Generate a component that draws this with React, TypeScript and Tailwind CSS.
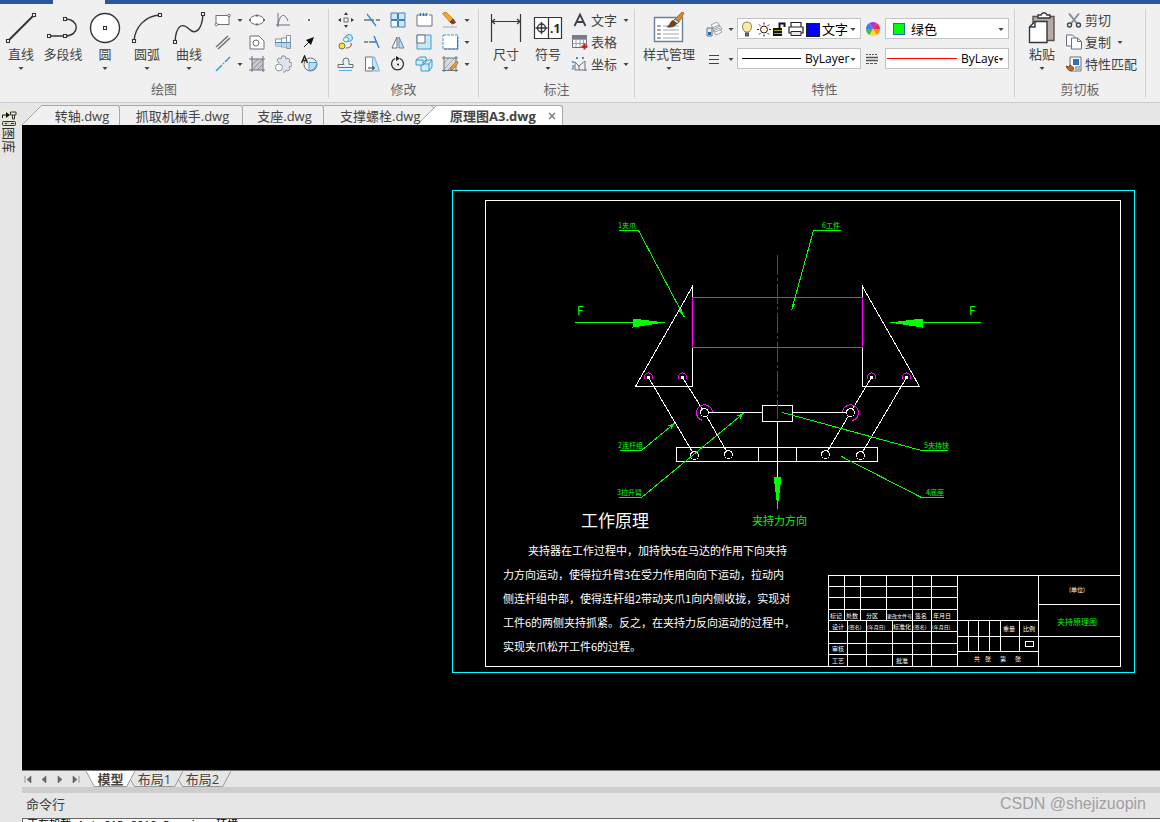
import React from 'react';

type Kids = { children?: React.ReactNode };

const Caret = () => (
  <svg width="6" height="8" viewBox="0 0 6 8" aria-hidden="true">
    <path d="M0.5 3h5L3 6z" fill="#444" />
  </svg>
);

const Big = ({ children }: Kids) => (
  <svg width="36" height="32" viewBox="0 0 36 32" fill="none" stroke="#33363d" strokeWidth="1.4" aria-hidden="true">
    {children}
  </svg>
);

const Sm = ({ children }: Kids) => (
  <svg width="18" height="18" viewBox="0 0 18 18" fill="none" stroke="#6b717c" strokeWidth="1" aria-hidden="true">
    {children}
  </svg>
);

const Node = ({ x, y }: { x: number; y: number }) => (
  <rect x={x - 1.5} y={y - 1.5} width="3" height="3" fill="#fff" strokeWidth="1.1" />
);

function BigButton({ label, icon, wide, caret = true }: { label: string; icon: React.ReactNode; wide?: boolean; caret?: boolean }) {
  return (
    <button type="button" className={(wide ? 'w-16' : 'w-[42px]') + ' flex shrink-0 flex-col items-center pt-[3px] text-[13px] leading-5 whitespace-nowrap'}>
      <Big>{icon}</Big>
      <span>{label}</span>
      {caret && <Caret />}
    </button>
  );
}

function Tool({ name, children }: { name: string } & Kids) {
  return (
    <button type="button" aria-label={name} className="flex h-[22px] w-[26px] items-center justify-center">
      <Sm>{children}</Sm>
    </button>
  );
}

function More({ name }: { name: string }) {
  return (
    <button type="button" aria-label={name} className="flex h-5 w-2 items-center justify-center">
      <Caret />
    </button>
  );
}

function TextTool({ label, caret, icon }: { label: string; caret?: boolean; icon: React.ReactNode }) {
  return (
    <button type="button" className="flex h-[22px] items-center gap-[2px] text-[13px] leading-5 whitespace-nowrap">
      <Sm>{icon}</Sm>
      <span>{label}</span>
      {caret && (
        <span className="pl-1">
          <Caret />
        </span>
      )}
    </button>
  );
}

function Group({ title, width, children }: { title: string; width: string } & Kids) {
  return (
    <section aria-label={title} className={width + ' flex shrink-0 flex-col border-r border-[#d2d2d2]'}>
      <div className="flex h-[71px] items-start">{children}</div>
      <h2 className="text-center text-[13px] leading-[18px] text-[#666]">{title}</h2>
    </section>
  );
}

function Combo({ label, value, lead, options, small }: { label: string; value: string; lead: React.ReactNode; options: string[]; small?: boolean }) {
  return (
    <label className="flex h-[21px] w-[124px] items-center border border-[#c3c3c3] bg-white pr-1 text-black">
      {lead}
      <select
        aria-label={label}
        defaultValue={value}
        className={(small ? 'text-[12px]' : 'text-[13px]') + ' h-[18px] min-w-0 flex-1 appearance-none overflow-hidden bg-transparent leading-[18px] [text-overflow:clip]'}
      >
        {options.map((o) => (
          <option key={o}>{o}</option>
        ))}
      </select>
      <Caret />
    </label>
  );
}

function DrawGroup() {
  return (
    <Group title="绘图" width="w-[329px]">
      <BigButton label="直线" icon={<><path d="M5 29L31 3" strokeWidth="2" /><Node x={5} y={29} /><Node x={31} y={3} /></>} />
      <BigButton label="多段线" caret={false} icon={<><path d="M4 24H20M20 7C35 7 35 24 20 24" /><Node x={4} y={24} /><Node x={20} y={24} /><Node x={20} y={7} /></>} />
      <BigButton label="圆" icon={<><circle cx="18" cy="16" r="14.5" fill="#fff" /><Node x={18} y={16} /></>} />
      <BigButton label="圆弧" icon={<><path d="M5 29C6 15 16 4 31 3" /><Node x={5} y={29} /><Node x={31} y={3} /></>} />
      <BigButton label="曲线" icon={<><path d="M4 30C5 12 12 11 18 17S31 19 32 2" /><Node x={4} y={30} /><Node x={32} y={2} /></>} />
      <div className="flex flex-col">
        <div className="flex items-center">
          <Tool name="矩形"><rect x="2" y="4.500" width="13" height="9" fill="#fff" /><circle cx="2.500" cy="13.500" r="1.300" fill="#fff" /><circle cx="15" cy="4.500" r="1.300" fill="#fff" /></Tool>
          <More name="更多矩形" />
          <Tool name="椭圆"><ellipse cx="9" cy="9" rx="7" ry="4.500" fill="#fff" /><path d="M9 3.500v2M9 12.500v2M1 9h2M15 9h2" strokeWidth="2" /></Tool>
          <Tool name="公式曲线"><path d="M4 2v14M2 14h14M4 14C6 2 11 2 14 10" /></Tool>
          <Tool name="点"><circle cx="9" cy="9" r="1" fill="#444" stroke="none" /></Tool>
        </div>
        <div className="flex items-center">
          <Tool name="平行线"><path d="M2 14L14 3M4 16L16 5" strokeWidth="1.500" /></Tool>
          <span className="w-2" />
          <Tool name="填充边界"><path d="M2 3h9l5 5v8H2z" fill="#fff" /><circle cx="8" cy="10" r="3" /></Tool>
          <Tool name="轴"><path d="M1.500 6h6v7h-6zM7.500 5h5v9h-5zM12.500 2.500h4v13h-4z" fill="#fff" stroke="#8a929e" /><path d="M1.500 9.500h6v3.500h-6zM8 10h4.500v4H8zM13 10h3v5h-3z" fill="#b9d6ee" stroke="none" /><path d="M1 9.500h16" stroke="#4b8cc6" /></Tool>
          <Tool name="箭头"><path d="M4 14l5-5" stroke="#111" /><path d="M14 4l-3 8-5-5z" fill="#111" stroke="none" /></Tool>
        </div>
        <div className="flex items-center">
          <Tool name="中心线"><path d="M2 16L8 10M9 9l1-1M11 7l5-5" stroke="#29a3e0" strokeWidth="1.500" /></Tool>
          <More name="更多中心线" />
          <Tool name="剖面线"><path d="M4 4h11v11H4z" fill="#c6c9cf" stroke="none" /><path d="M4 10l6-6M4 15L15 4M9 15l6-6" stroke="#8d929b" /><path d="M1 4h16M1 15h16M4 1v16M15 1v16" /></Tool>
          <Tool name="齿轮"><path d="M5 8L3 5l2-2 2 1 1-3h3l1 3 2-1 2 2-1 2 3 1v3l-3 1 1 2-2 2-2-1-1 2H9" fill="#dfe3ee" stroke="#8b91a2" /><circle cx="5" cy="12.500" r="3.500" fill="#fff" stroke="#8b91a2" /></Tool>
          <Tool name="局部放大图"><circle cx="10.500" cy="9.500" r="6.500" /><path d="M9 7.500h7.500a7 7 0 0 1-7.500 8z" fill="#b4e0fa" stroke="#4c9ed4" /><path d="M1.500 8l3-7 3 7M3 5.500h3" stroke="#222" strokeWidth="1.400" /></Tool>
        </div>
      </div>
    </Group>
  );
}

function ModifyGroup() {
  return (
    <Group title="修改" width="w-[150px]">
      <div className="flex flex-col pl-1">
        <div className="flex items-center">
          <Tool name="移动"><rect x="7" y="7" width="4" height="4" /><path d="M9 1l2 3H7zM9 17l2-3H7zM1 9l3-2v4zM17 9l-3-2v4z" fill="#33363d" stroke="none" /></Tool>
          <Tool name="裁剪"><path d="M1 9h10M13 9h4" strokeWidth="1.300" /><path d="M4 3l9 12" stroke="#2b8bd3" strokeWidth="1.300" /></Tool>
          <Tool name="阵列"><path d="M2 2h6.500v6.500H2zM9.500 9.500H16V16H9.500zM9.500 2H16v6.500H9.500z" fill="#c8e8fb" stroke="#4580b1" /><path d="M2 9.500h6.500V16H2z" fill="#fff" stroke="#4580b1" /></Tool>
          <Tool name="打断"><path d="M5 4H2v11h15V4h-3M7 4h5" fill="#fff" /><path d="M5.500 2v3M8.500 2v3M11.500 2v3" stroke="#2b78d0" strokeWidth="1.500" /></Tool>
          <Tool name="删除"><path d="M1.500 2.500L5 1l7 7-3 3z" fill="#f5a82c" stroke="#c98227" /><path d="M12 8l2.500 3.500L11.500 13 9 11z" fill="#7a4040" stroke="#5c3b3b" /><path d="M2 16h14" stroke="#aaa" /></Tool>
          <More name="更多删除" />
        </div>
        <div className="flex items-center">
          <Tool name="复制对象"><circle cx="12" cy="5" r="3.500" fill="#c4e6fa" stroke="#3b9dd8" /><circle cx="9" cy="6.500" r="2.500" fill="#e6f5fd" stroke="#3b9dd8" /><circle cx="5" cy="13" r="3" fill="#fbe819" /><path d="M9 15c4 0 6-2 5-5" stroke="#c32b2b" /></Tool>
          <Tool name="延伸"><path d="M1 9h4M6 9h3" strokeWidth="1.500" /><path d="M9 9h4M11 3l5 12" stroke="#2b78c6" strokeWidth="1.300" /></Tool>
          <Tool name="镜像"><path d="M8 4v11H3z" fill="#fff" /><path d="M10 4v11h5z" fill="#b8def5" stroke="#5b8cb0" /></Tool>
          <Tool name="缩放"><path d="M2 2h14v14H2z" fill="#c6e9fc" stroke="#4b96c9" /><path d="M2 2h8v8H2z" fill="#fff" /></Tool>
          <Tool name="分解"><path d="M2 2h15v14H2z" fill="#fff" strokeDasharray="3 1" stroke="#4b96c9" /><path d="M16.500 4v12H3" /></Tool>
          <More name="更多分解" />
        </div>
        <div className="flex items-center">
          <Tool name="偏移"><path d="M1 12.500h15v-3h-4V6a3 3 0 0 0-6 0v2l1 1.500H1z" fill="#e3f2fc" /><path d="M2 15.500h13" stroke="#59b1e4" /></Tool>
          <Tool name="拉伸"><path d="M2.500 2h7v14h-7z" fill="#fff" /><path d="M9.500 2h2l5 14h-7z" fill="#c4e6fa" stroke="#79afd1" /><path d="M5 13h6M9.500 11l2 2-2 2" stroke="#333" /></Tool>
          <Tool name="旋转"><path d="M11 3.500a6 6 0 1 1-5 0" stroke="#333" strokeWidth="1.300" /><path d="M7 1l4 2.500L7 6z" fill="#222" stroke="none" /><circle cx="9" cy="9.500" r="1" fill="#222" stroke="none" /></Tool>
          <Tool name="三维"><path d="M1 5l4-3h6v5l-3 3H1zM8 8l3-3h6v7l-3 4H6v-6" fill="#d5edfb" stroke="#3e96cc" /><path d="M8 9h6v7M14 9l3-4M1 5h7v5" stroke="#3e96cc" /></Tool>
          <Tool name="编辑填充"><path d="M3 3h12v12H3z" fill="#d7dade" stroke="none" /><path d="M3 8l5-5M3 14L14 3M7 15l8-8" stroke="#aaa" /><path d="M1 3h16M1 15.500h16M3 1v16M15 1v16" /><path d="M16 6l-6 6-1 3 3-1 5-6z" fill="#eca22e" stroke="#b0752e" /></Tool>
          <More name="更多编辑" />
        </div>
      </div>
    </Group>
  );
}

function AnnotateGroup() {
  return (
    <Group title="标注" width="w-[156px]">
      <div className="flex pl-[6px]">
        <BigButton label="尺寸" icon={<path d="M3.500 2v28M32.500 2v28M3 9.500h30M7 7L4 9.500 7 12M29 7l3 2.500-3 2.500" strokeWidth="1.200" />} />
        <BigButton
          label="符号"
          icon={
            <>
              <path d="M4.500 5.500h27v21h-27zM18.500 5.500v21" fill="#fff" strokeWidth="1.200" />
              <circle cx="11.500" cy="16" r="4" />
              <path d="M11.500 10v12M5.500 16h12" />
              <text x="20" y="21" fontSize="12" fontWeight="700" fontFamily="Open Sans, sans-serif" fill="#222" stroke="none">.1</text>
            </>
          }
        />
        <div className="flex flex-col pl-[2px]">
          <TextTool label="文字" caret icon={<path d="M3.500 15L9 3.500l5.500 11.500M5.500 11h7" stroke="#3b4049" strokeWidth="1.800" />} />
          <TextTool label="表格" icon={<><path d="M1.500 2.500h14v12h-14z" fill="#fff" /><path d="M1.500 6.500h14M1.500 10.500h14M5 4v10M9 4v10M12.500 4v10" stroke="#9aa0a8" /><path d="M1 2h15v4H1z" fill="#777d86" stroke="none" /><path d="M13.500 10.500v6M10.500 13.500h6" stroke="#c81e1e" strokeWidth="2" /></>} />
          <TextTool label="坐标" caret icon={<><path d="M4 15V7l4 4 6-5M4 15h12M8 11v4M14 6v10" /><path d="M5 2l2 2M7 2L5 4M11 2l2 2M13 2l-2 2M1 6l1 2 1-2M1 11h2l-2 3h2" stroke="#2f91d1" /></>} />
        </div>
      </div>
    </Group>
  );
}

function LayerLead() {
  return (
    <svg width="84" height="18" viewBox="0 0 84 18" fill="none" stroke="#222" className="shrink-0" aria-hidden="true">
      <path d="M7 12C3 8 4 2 9 2s6 6 2 10z" fill="#ffe9a3" stroke="#8a7d50" />
      <path d="M7.500 13h3v3h-3z" fill="#777" stroke="#444" />
      <circle cx="26" cy="9.500" r="3.500" fill="#fff3cf" />
      <path d="M26 2.500v2M26 14.500v2M19 9.500h2M31 9.500h2M21 4.500l1.500 1.500M29.500 13l1.500 1.500M21 14.500l1.500-1.500M29.500 6l1.500-1.500" />
      <path d="M41.500 8V3.500h5V7" strokeWidth="2" stroke="#111" />
      <path d="M35 8h9v8h-9z" fill="#111" stroke="none" />
      <path d="M36 10.500h8M36 13.500h8" stroke="#a6a324" />
      <path d="M53 7V2.500h10V7M51 7h14v6H51z" fill="#fff" strokeWidth="1.200" />
      <path d="M53 11.500h10v4H53z" fill="#e4e8ee" />
      <rect x="68.500" y="3.500" width="13" height="13" fill="#0000ff" />
    </svg>
  );
}

const Wheel = () => (
  <svg width="16" height="16" viewBox="0 0 16 16" aria-hidden="true">
    <path d="M8 8L4.500 2A7 7 0 0 1 11.500 2z" fill="#b52df0" />
    <path d="M8 8L11.500 2A7 7 0 0 1 15 8z" fill="#f12c50" />
    <path d="M8 8h7a7 7 0 0 1-3.500 6z" fill="#ff8a1c" />
    <path d="M8 8l3.500 6a7 7 0 0 1-7 0z" fill="#ffdc2a" />
    <path d="M8 8l-3.500 6A7 7 0 0 1 1 8z" fill="#45bd4a" />
    <path d="M8 8H1a7 7 0 0 1 3.500-6z" fill="#3f7fe8" />
  </svg>
);

function PropertiesGroup() {
  return (
    <Group title="特性" width="w-[380px]">
      <div className="pl-[2px]">
        <BigButton
          wide
          label="样式管理"
          icon={
            <>
              <path d="M3.500 5.500h28v24h-28z" fill="#fff" stroke="#6a8299" />
              <path d="M6 14h4M6 18h4M6 22h4M6 26h4" stroke="#555" strokeWidth="1" />
              <path d="M12 14h16M12 18h16M12 22h16M12 26h16" stroke="#9ba5bb" strokeWidth="1" />
              <path d="M31 0l2 1-5 9-4-3z" fill="#d9892f" stroke="#b46b20" strokeWidth="1" />
              <path d="M24 7l4 3-2 2-4-3z" fill="#e8eaf0" stroke="#667" strokeWidth="1" />
              <path d="M22 8l4 3c-2 5-7 5-11 4 4-1 3-5 7-7z" fill="#6f4421" stroke="none" />
            </>
          }
        />
      </div>
      <div className="flex flex-col gap-[9px] pt-[9px] pl-1">
        <div className="flex items-center">
          <Sm><path d="M6 5l6-3 3 4-6 3zM7 8l7-3 3 4-7 3zM8 11l6-3 3 4-6 3z" fill="#fff" stroke="#9aa1aa" /><path d="M2 8h5v8H2z" fill="#dfe9f3" /><path d="M3 12h3v3H3z" fill="#246ba8" stroke="none" /></Sm>
          <div className="w-[14px] pl-1"><More name="图层工具" /></div>
          <Combo label="图层" value="文字" options={['文字', '轮廓']} lead={<LayerLead />} />
          <div className="w-6 pl-1"><Wheel /></div>
          <Combo
            label="颜色"
            value="绿色"
            options={['绿色', '红色']}
            lead={
              <span className="w-[25px] pl-[7px]">
                <span className="block size-3 border border-[#2369c9] bg-[#00ff00]" />
              </span>
            }
          />
        </div>
        <div className="flex items-center">
          <Sm><path d="M4 5.500h10M4 9.500h10M4 13.500h10" stroke="#444" strokeWidth="1.200" /></Sm>
          <div className="w-[14px] pl-1"><More name="线宽" /></div>
          <Combo small label="线型" value="ByLayer" options={['ByLayer', 'ByBlock']} lead={<span className="mr-1 ml-1 h-px w-[59px] shrink-0 bg-black" />} />
          <div className="w-6 pl-1">
            <svg width="14" height="16" viewBox="0 0 14 16" stroke="#555" aria-hidden="true">
              <path d="M1 3.500h12" strokeDasharray="2 1" /><path d="M1 6.500h12M1 9.500h12" strokeWidth="1.300" /><path d="M1 12.500h12" strokeDasharray="3 1" />
            </svg>
          </div>
          <Combo small label="线型比例" value="ByLayer" options={['ByLayer', 'ByBlock']} lead={<span className="mr-1 ml-px h-px w-[70px] shrink-0 bg-[#ff0000]" />} />
        </div>
      </div>
    </Group>
  );
}

function ClipboardGroup() {
  return (
    <Group title="剪切板" width="w-[131px]">
      <div className="flex pl-[6px]">
        <BigButton
          label="粘贴"
          icon={
            <>
              <path d="M9 4.500h21v24H9z" fill="#b7aaa0" stroke="#56514f" />
              <path d="M14 6V3h3c1-3 5-3 6 0h3v3z" fill="#fff" />
              <path d="M11 9.500h12v21H5.500V15z" fill="#fff" />
              <path d="M11 9.500V15H5.500" />
            </>
          }
        />
        <div className="flex flex-col pl-[2px]">
          <TextTool label="剪切" icon={<><path d="M4 2.500l8 10M14 2.500l-8 10" stroke="#8a8f95" strokeWidth="2" /><circle cx="4.500" cy="14" r="2" stroke="#444" strokeWidth="1.400" /><circle cx="13.500" cy="14" r="2" stroke="#444" strokeWidth="1.400" /></>} />
          <TextTool label="复制" caret icon={<><path d="M1.500 2h6l3 3v8h-9z" fill="#fff" /><path d="M6.500 5h6l4 3.500V16h-10z" fill="#fff" /><path d="M12.500 5v3.500h4" /></>} />
          <TextTool label="特性匹配" icon={<><path d="M5 2h11v14H5z" fill="#f5f8fa" /><path d="M8 4h6v6H8z" fill="#3374ac" stroke="none" /><path d="M10 12h5M10 14h5" /><path d="M1 11l3 1 1-2 4 3c-1 4-6 4-8-2z" fill="#b86c2b" stroke="#8c4b1c" /></>} />
        </div>
      </div>
    </Group>
  );
}

function Ribbon() {
  return (
    <div className="flex shrink-0 overflow-hidden border-b border-[#c9c9c9] bg-[#f0f0f0] pt-[5px] pb-1 text-[#444]">
      <DrawGroup />
      <ModifyGroup />
      <AnnotateGroup />
      <PropertiesGroup />
      <ClipboardGroup />
    </div>
  );
}

function DocTabs() {
  const tab = 'h-5 shrink-0 rounded-tr-[3px] border-t border-r border-[#a8a8a8] bg-[#f0f0f0] pl-[3px] text-center whitespace-nowrap';
  return (
    <nav aria-label="图纸" className="flex h-[22px] shrink-0 items-end bg-[#e6e6e6] text-[13px] leading-[18px] text-[#444]">
      <svg width="20" height="20" viewBox="0 0 20 20" className="shrink-0" aria-hidden="true">
        <path d="M0 20L20 0V20z" fill="#f0f0f0" />
        <path d="M0 20L19.500 0.500H20" fill="none" stroke="#a8a8a8" />
      </svg>
      <button type="button" className={tab + ' w-[78px]'}>转轴.dwg</button>
      <button type="button" className={tab + ' w-[123px]'}>抓取机械手.dwg</button>
      <button type="button" className={tab + ' w-[81px]'}>支座.dwg</button>
      <button type="button" className="relative z-10 h-5 w-[93px] shrink-0 border-t border-[#a8a8a8] bg-[#f0f0f0] pl-4 text-left whitespace-nowrap">
        支撑螺栓.dwg
      </button>
      <svg width="20" height="20" viewBox="0 0 20 20" className="shrink-0" aria-hidden="true">
        <path d="M0 0H20V20H0z" fill="#f0f0f0" />
        <path d="M0 20L20 0V20z" fill="#fff" />
        <path d="M0 0.500H20M0 20L19.500 0.500M14 0.500L17 3" fill="none" stroke="#a8a8a8" />
      </svg>
      <div className="flex h-5 w-[126px] shrink-0 items-center justify-between rounded-tr-[3px] border-t border-r border-[#a8a8a8] bg-white pr-[6px] pl-[13px]">
        <button type="button" aria-current="page" className="font-bold whitespace-nowrap">原理图A3.dwg</button>
        <button type="button" aria-label="关闭">
          <svg width="8" height="8" viewBox="0 0 8 8" aria-hidden="true">
            <path d="M1 1l6 6M7 1L1 7" stroke="#777" strokeWidth="1.400" />
          </svg>
        </button>
      </div>
    </nav>
  );
}

const pins = [648, 682, 871, 906];
const blockText: [number, number, string][] = [
  [830, 618, '标记'], [846, 618, '处数'], [866, 618, '分区'], [887, 618, '更改文件号'], [915, 618, '签名'], [933, 618, '年月日'],
  [832, 629, '设计'], [848, 629, '(签名)'], [867, 629, '(年月日)'], [893, 629, '标准化'], [913, 629, '(签名)'], [932, 629, '(年月日)'],
  [832, 651, '审核'], [832, 663, '工艺'], [896, 663, '批准'], [1003, 631, '重量'], [1023, 631, '比例'],
  [974, 661, '共'], [985, 661, '张'], [1000, 661, '第'], [1015, 661, '张'],
];

function Drawing() {
  return (
    <svg className="block size-full" viewBox="22 125 1138 645" role="img" aria-label="夹持原理图">
      <g transform="translate(0.5 0.5)" fill="none" strokeWidth="1" shapeRendering="crispEdges">
        <path d="M452 190H1134V672H452z" stroke="#00ffff" />
        <path
          stroke="#fff"
          d="M485 200H1120V666H485zM692 286V386H635zM862 286V386H919zM648 377L694 455M682 377L704 412L728 454M871 377L850 412L825 454M906 377L860 455M708 412H762M792 412H846M762 405H792V421H762zM676 447H877V461H676zM758 447V461M796 447V461M777 421V485"
        />
        <path d="M692 297H862V347H692z" stroke="#ff00ff" />
        <path d="M777 254V418" stroke="#ff0000" strokeDasharray="20 3 3 3" />
        <g stroke="#ff00ff">
          {pins.map((x) => (
            <path key={x} d={`M${x - 4} 379A4.500 4.500 0 1 1 ${x + 4} 379`} />
          ))}
          <path d="M712 412A8 8 0 1 0 702 420M842 412A8 8 0 1 1 852 420" />
        </g>
        <g stroke="#fff">
          {pins.map((x) => (
            <circle key={x} cx={x} cy="377" r="1" />
          ))}
          {[[704, 412], [850, 412], [694, 455], [728, 454], [825, 454], [860, 455]].map(([x, y]) => (
            <circle key={x} cx={x} cy={y} r="4" fill="#000" />
          ))}
        </g>
        <path
          stroke="#00ff00"
          d="M618 230H638L684 317M840 230H813L791 310M574 322H664M980 322H889M619 450H641L675 422M618 497H641L744 412M947 450H921L782 412M943 497H921L841 456M777 476V508"
        />
        <path
          fill="#00ff00"
          d="M632 318V327L664 322zM922 318V327L889 322zM773 476H781L777 508zM684 317L678 310L681 308zM791 310L791 303L794 304zM675 422L671 428L668 425zM744 412L740 418L737 415z"
        />
        <path
          stroke="#fff"
          d="M828 666V575H1120M828 586H957M828 597H957M828 609H957M828 620H1038M828 631H957M828 643H957M828 654H957M844 575V620M860 575V620M886 575V620M912 575V666M931 575V666M847 620V666M866 620V666M892 620V666M957 575V666M1038 575V666M1038 604H1120M1038 636H1120M957 636H1038M957 651H1038M968 620V651M978 620V651M989 620V651M1000 620V651M1019 620V651M1025 641H1033V646H1025z"
        />
      </g>
      <g fontFamily="'Noto Sans CJK SC', sans-serif">
        <g fill="#00ff00" fontSize="7">
          <text x="618" y="228">1夹爪</text>
          <text x="822" y="228">6工件</text>
          <text x="618" y="448">2连杆组</text>
          <text x="617" y="495">3拉升臂</text>
          <text x="924" y="448">5夹持快</text>
          <text x="926" y="495">4底座</text>
          <text x="1057" y="625" fontSize="8">夹持原理图</text>
          <text x="752" y="525" fontSize="11">夹持力方向</text>
          <text x="577" y="315" fontSize="12">F</text>
          <text x="969" y="315" fontSize="12">F</text>
        </g>
        <g fill="#fff" fontSize="6">
          {blockText.map(([x, y, t]) => (
            <text key={`${x}-${y}`} x={x} y={y} fontSize={t.length > 3 ? 5 : 6}>{t}</text>
          ))}
          <text x="1069" y="592">(单位)</text>
        </g>
        <text x="581" y="527" fill="#fff" fontSize="17">工作原理</text>
        <g fill="#fff" fontSize="11">
          <text x="528" y="555">夹持器在工作过程中，加持快5在马达的作用下向夹持</text>
          <text x="503" y="579">力方向运动，使得拉升臂3在受力作用向向下运动，拉动内</text>
          <text x="503" y="603">侧连杆组中部，使得连杆组2带动夹爪1向内侧收拢，实现对</text>
          <text x="503" y="627">工件6的两侧夹持抓紧。反之，在夹持力反向运动的过程中，</text>
          <text x="503" y="651">实现夹爪松开工件6的过程。</text>
        </g>
      </g>
    </svg>
  );
}

const Slant = ({ fill, left }: { fill: string; left?: boolean }) => (
  <svg width="9" height="17" viewBox="0 0 9 17" className="shrink-0" aria-hidden="true">
    {left ? (
      <>
        <path d="M0 0H9V16z" fill={fill} />
        <path d="M0 0L8.500 16" stroke="#999" fill="none" />
      </>
    ) : (
      <>
        <path d="M9 0H0V16z" fill={fill} />
        <path d="M9 0L0.500 16M4 8l5 8" stroke="#999" fill="none" />
      </>
    )}
  </svg>
);

function LayoutTabs() {
  const arrows: [string, string][] = [
    ['第一个', 'M1 1v7M7 1v7L3 4.500z'],
    ['上一个', 'M6 1v7L2 4.500z'],
    ['下一个', 'M2 1v7l4-3.500z'],
    ['最后一个', 'M7 1v7M1 1v7l4-3.500z'],
  ];
  return (
    <nav aria-label="布局" className="flex h-[17px] shrink-0 items-start border-t border-[#777] bg-[#e6e6e6] text-[13px] leading-[14px] text-[#444]">
      <div className="flex h-4 w-16 items-center gap-2 pl-[2px]">
        {arrows.map(([n, d]) => (
          <button key={n} type="button" aria-label={n}>
            <svg width="8" height="9" viewBox="0 0 8 9" fill="#666" stroke="#666" strokeWidth="0.600" aria-hidden="true"><path d={d} /></svg>
          </button>
        ))}
      </div>
      <Slant fill="#fff" left />
      <button type="button" aria-current="page" className="h-4 w-[31px] border-b border-[#999] bg-white font-bold whitespace-nowrap">模型</button>
      <Slant fill="#fff" />
      <button type="button" className="h-4 w-[39px] border-b border-[#999] whitespace-nowrap">布局1</button>
      <Slant fill="none" />
      <button type="button" className="h-4 w-[39px] border-b border-[#999] whitespace-nowrap">布局2</button>
      <svg width="9" height="17" viewBox="0 0 9 17" aria-hidden="true"><path d="M9 0L0.500 16" stroke="#999" /></svg>
    </nav>
  );
}

export default function App() {
  return (
    <div className="flex h-screen flex-col overflow-hidden bg-[#e6e6e6] font-['Open_Sans','Noto_Sans_CJK_SC',sans-serif]">
      <header className="flex h-1 shrink-0 bg-[#2b579a] pl-[53px]">
        <div className="w-[52px] bg-[#f0f0f0]" />
      </header>
      <Ribbon />
      <div className="flex min-h-0 flex-1">
        <aside className="flex w-[22px] shrink-0 flex-col pt-[7px] pl-[1px]">
          <button type="button" className="flex w-4 flex-col items-center text-[#333]">
            <svg width="16" height="17" viewBox="0 0 16 17" fill="none" stroke="#333" aria-hidden="true">
              <path d="M0 0h16v17H0z" fill="#e9ebd6" stroke="none" />
              <path d="M1.500 8V5H6" stroke="#111" />
              <path d="M5 2L9 5 5 8z" fill="#111" stroke="none" />
              <path d="M9.500 2v3H15V2zM11.500 5v4h2V5" />
              <rect x="1.500" y="11.500" width="13" height="4" rx="1" fill="#d5d5d5" />
              <path d="M4 13.500h2M10 13.500h3" />
            </svg>
            <span className="text-[13px] leading-4 [text-orientation:sideways] [writing-mode:vertical-rl]">图库</span>
          </button>
        </aside>
        <div className="flex min-w-0 flex-1 flex-col">
          <DocTabs />
          <main className="min-h-0 flex-1 bg-black">
            <Drawing />
          </main>
          <LayoutTabs />
          <div className="h-[6px] shrink-0 bg-[#cdcdcd]" />
          <footer className="shrink-0">
            <div className="flex h-[25px] items-center justify-between pr-[14px] pb-[3px] pl-1">
              <label htmlFor="command" className="text-[13px] leading-5 text-[#444]">命令行</label>
              <span className="font-['Liberation_Sans',sans-serif] text-base leading-5 text-[#a0a0a0]">CSDN @shejizuopin</span>
            </div>
            <div className="h-1 overflow-hidden border-t border-l border-[#666] bg-white">
              <input
                id="command"
                readOnly
                defaultValue="正在加载 AutoCAD 2010 Drawing 环境"
                className="block h-3 w-full pl-1 font-['Liberation_Mono','Noto_Sans_CJK_SC',monospace] text-[11px] leading-3 text-black"
              />
            </div>
          </footer>
        </div>
      </div>
    </div>
  );
}
